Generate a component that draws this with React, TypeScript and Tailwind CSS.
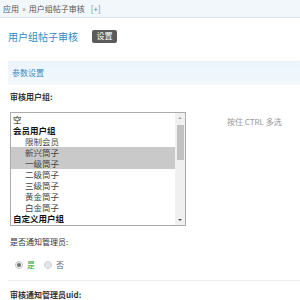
import React from "react";

const font = { fontFamily: '"Noto Sans CJK SC", "Noto Sans", sans-serif' };

const options: { t: string; kind: "top" | "group" | "child"; sel?: boolean }[] = [
  { t: "空", kind: "top" },
  { t: "会员用户组", kind: "group" },
  { t: "限制会员", kind: "child" },
  { t: "新兴筒子", kind: "child", sel: true },
  { t: "一级筒子", kind: "child", sel: true },
  { t: "二级筒子", kind: "child" },
  { t: "三级筒子", kind: "child" },
  { t: "黄金筒子", kind: "child" },
  { t: "白金筒子", kind: "child" },
  { t: "自定义用户组", kind: "group" },
];

export default function App() {
  return (
    <div className="w-[300px] h-[300px] bg-white overflow-hidden text-[#333]" style={font}>
      <div className="h-[18px] bg-[#f2f7fb] border-b border-[#d7e4ee] flex items-center pl-[3px] text-[8px] text-[#555] gap-[3px]">
        <span>应用</span>
        <span className="text-[#888]">»</span>
        <span>用户组帖子审核</span>
        <span className="ml-[3px] text-[#6a86a0]">[+]</span>
      </div>
      <div className="mt-[8px] h-[20px] flex items-center pl-[8px]">
        <span className="text-[10px] text-[#2f8cc4]">用户组帖子审核</span>
        <span className="ml-[14px] h-[13px] w-[25px] rounded-[2px] bg-[#5b5b5b] text-white text-[8px] flex items-center justify-center">设置</span>
      </div>
      <div className="mt-[15px] ml-[8px] h-[24px] bg-gradient-to-b from-[#ebf4fc] to-[#f3f8fc] flex items-center pl-[4px] text-[8px] text-[#3d8cc4]">
        参数设置
      </div>
      <div className="h-[24px] flex items-center pl-[10px] text-[8px] font-bold text-[#333]">审核用户组:</div>
      <div className="mt-[3px] flex items-start pl-[10px]">
        <div className="w-[176px] h-[114px] border border-[#ababab] flex bg-white">
          <div className="flex-1 pt-[1px]">
            {options.map((o, i) => (
              <div
                key={i}
                className={
                  "h-[11px] flex items-center text-[8.5px] leading-none " +
                  (o.kind === "child" ? "pl-[14px] text-[#444] " : "pl-[2px] text-[#111] ") +
                  (o.kind === "group" ? "font-bold " : "") +
                  (o.sel ? "bg-[#c9c9c9]" : "")
                }
              >
                {o.t}
              </div>
            ))}
          </div>
          <div className="w-[10px] bg-[#f0f0f0] flex flex-col items-center">
            <div className="h-[10px] flex items-center justify-center">
              <div className="w-0 h-0 border-l-[2px] border-r-[2px] border-b-[2px] border-l-transparent border-r-transparent border-b-[#a3a3a3]" />
            </div>
            <div className="mt-[2px] w-[7px] h-[35px] bg-[#c1c1c1]" />
            <div className="flex-1" />
            <div className="h-[10px] flex items-center justify-center">
              <div className="w-0 h-0 border-l-[2px] border-r-[2px] border-t-[2px] border-l-transparent border-r-transparent border-t-[#505050]" />
            </div>
          </div>
        </div>
        <div className="ml-[41px] mt-[4px] text-[8px] text-[#999]">按住 CTRL 多选</div>
      </div>
      <div className="mt-[6px] h-[20px] flex items-center pl-[10px] text-[8px] text-[#333]">是否通知管理员:</div>
      <div className="mt-[3px] h-[20px] flex items-center pl-[15px] text-[8px]">
        <span className="w-[8px] h-[8px] rounded-full border border-[#c4c4c4] bg-[#f3f3f3] flex items-center justify-center">
          <span className="w-[4px] h-[4px] rounded-full bg-[#6e6e6e]" />
        </span>
        <span className="ml-[4px] text-[#2da52d]">是</span>
        <span className="ml-[9px] w-[8px] h-[8px] rounded-full border border-[#d0d0d0] bg-[#e6e6e6]" />
        <span className="ml-[4px] text-[#666]">否</span>
      </div>
      <div className="mt-[5px] ml-[8px] border-t border-[#eeeeee]" />
      <div className="mt-[4px] h-[20px] flex items-center pl-[10px] text-[8px] font-bold text-[#333]">审核通知管理员uid:</div>
    </div>
  );
}
